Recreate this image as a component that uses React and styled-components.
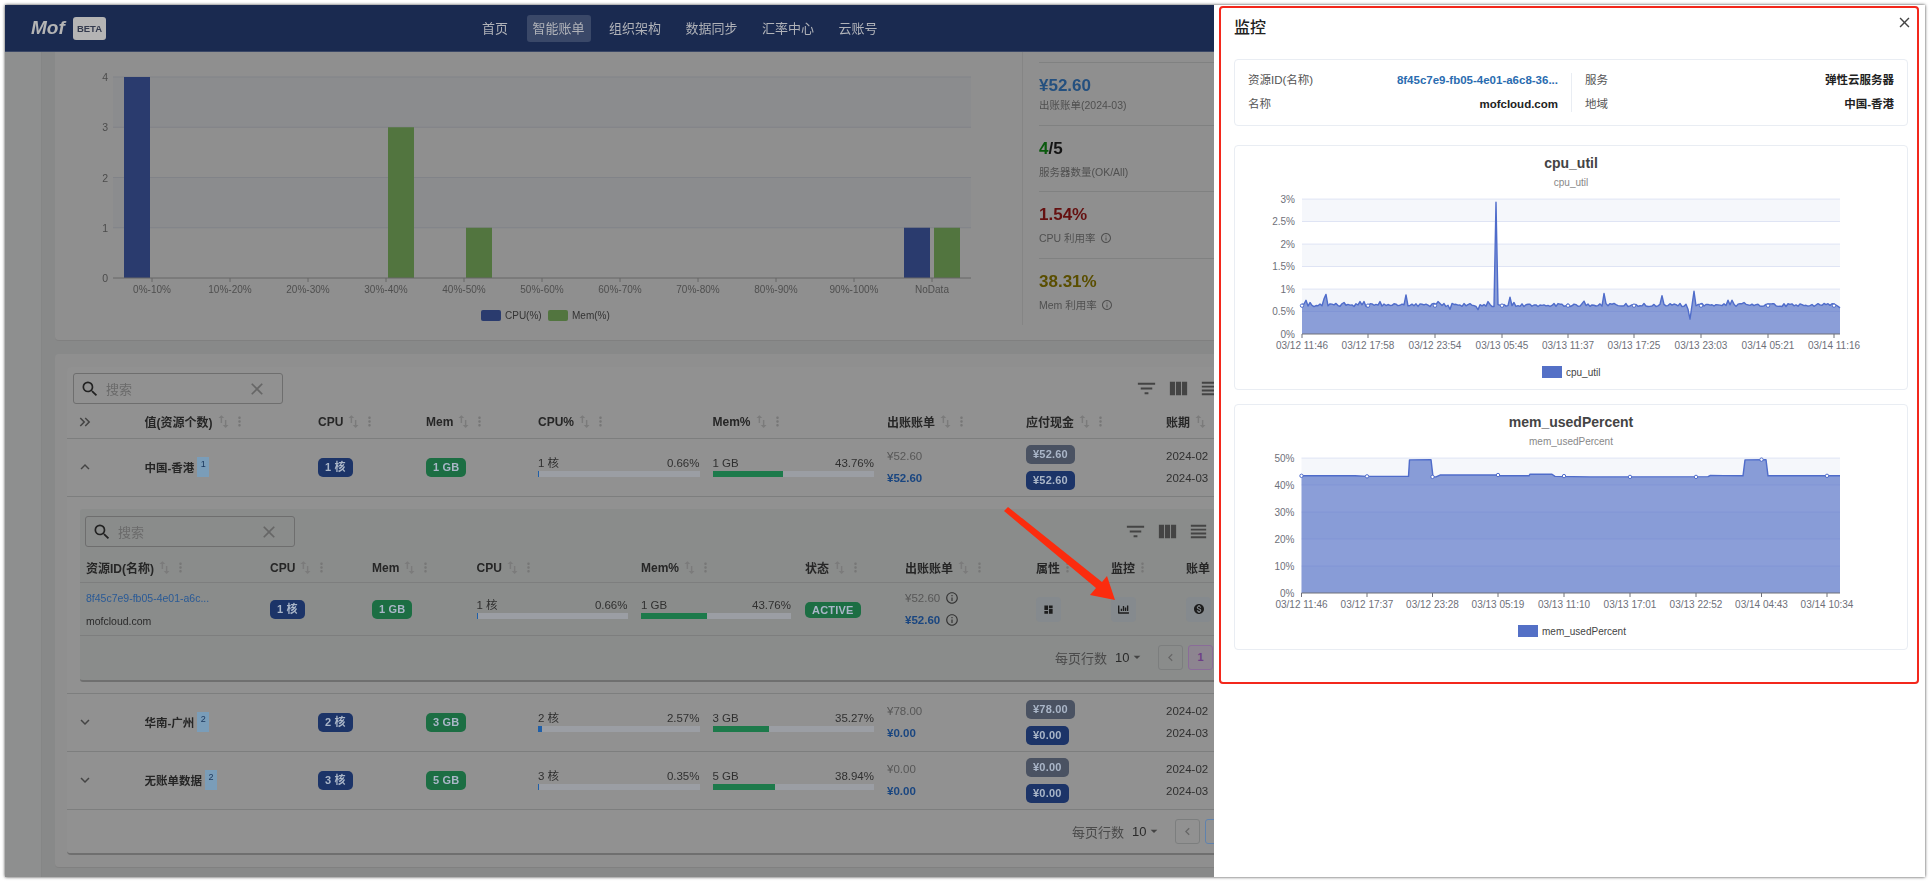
import React from 'react'
import styled, { createGlobalStyle } from 'styled-components'
import {
  MdSearch, MdClose, MdFilterList, MdViewColumn, MdViewHeadline, MdSwapVert, MdMoreVert,
  MdExpandLess, MdExpandMore, MdKeyboardDoubleArrowRight, MdInfoOutline, MdDashboard,
  MdMonetizationOn, MdChevronLeft, MdArrowDropDown,
} from 'react-icons/md'
import { FaChartBar } from 'react-icons/fa'

const FONT = `"Liberation Sans", "Noto Sans CJK SC", sans-serif`

const GlobalStyle = createGlobalStyle`
  html, body { margin: 0; height: 100%; background: #ffffff; overflow: hidden; }
  body { font-family: ${FONT}; }
  * { box-sizing: border-box; }
`

const Window = styled.div`
  position: absolute;
  left: 5px;
  top: 5px;
  width: 1920px;
  height: 872px;
  overflow: hidden;
  background: #8e8f8f;
  box-shadow: 0 0 3px rgba(0, 0, 0, 0.75);
`

const Blurred = styled.div`
  width: 100%;
  height: 100%;
  filter: blur(0.5px);
`

const NavBar = styled.header`
  height: 47px;
  display: flex;
  align-items: center;
  padding-left: 26px;
  background: #1a2a50;
  border-bottom: 1px solid #3a4766;
`

const Logo = styled.span`
  width: 42px;
  font-size: 19px;
  font-weight: bold;
  font-style: italic;
  color: #b4b4b4;
`

const BetaBadge = styled.span`
  width: 33px;
  height: 23px;
  display: flex;
  align-items: center;
  justify-content: center;
  border-radius: 3px;
  background: #b4b4b4;
  color: #333a4d;
  font-size: 9.5px;
  font-weight: bold;
`

const NavItems = styled.nav`
  display: flex;
  gap: 12.5px;
  margin-left: 370px;
`

const NavItem = styled.a`
  height: 27px;
  line-height: 27px;
  padding: 0 6px;
  border-radius: 3px;
  font-size: 13px;
  color: #b0b2b8;
  background: ${(p) => (p.$active ? '#3a4868' : 'transparent')};
`

const Main = styled.main`
  height: 825px;
  margin-left: 36px;
  padding-left: 13px;
  border-left: 1px solid #858686;
  background: #888989;
  display: flex;
  flex-direction: column;
  gap: 13px;
`

const SummaryCard = styled.section`
  height: 289px;
  flex: none;
  display: flex;
  background: #8f8f8f;
  border-bottom: 1px solid #808080;
  border-radius: 0 0 4px 4px;
`

const ChartPane = styled.div`
  width: 968px;
  height: 273px;
  flex: none;
  border-right: 1px solid #858585;
`

const StatsPane = styled.div`
  flex: 1;
  padding: 10px 0 0 16px;
`

const Stat = styled.div`
  height: ${(p) => p.$height}px;
  padding-top: 12px;
  border-top: 1px solid #808181;
`

const StatValue = styled.div`
  font-size: 17px;
  line-height: 22px;
  font-weight: bold;
  color: ${(p) => p.$color || '#141414'};
`

const StatDim = styled.span`
  color: ${(p) => p.$color};
`

const StatLabel = styled.div`
  display: flex;
  align-items: center;
  gap: 4px;
  margin-top: ${(p) => p.$gap}px;
  font-size: 10.5px;
  line-height: 14px;
  color: #505050;
  svg { font-size: 12px; }
`

const TableCard = styled.section`
  height: 514px;
  flex: none;
  padding: 13px 12px;
  background: #8f8f8f;
  border-radius: 4px;
  border-bottom: 1px solid #808080;
`

const TablePaper = styled.div`
  height: 488px;
  background: #919191;
  border-radius: 4px;
  border-bottom: 2px solid #6f6f6f;
`

const Toolbar = styled.div`
  height: ${(p) => p.$h}px;
  display: flex;
  align-items: flex-start;
  justify-content: space-between;
  padding: ${(p) => p.$top}px 0 0 ${(p) => p.$left}px;
`

const SearchBox = styled.div`
  width: 210px;
  height: 31px;
  display: flex;
  align-items: center;
  padding: 0 15px 0 6px;
  border: 1px solid #6e6e6e;
  border-radius: 3px;
  color: #222;
  svg { font-size: 20px; }
`

const SearchText = styled.span`
  flex: 1;
  margin-left: 6px;
  font-size: 13px;
  color: #6b6b6b;
`

const ClearIcon = styled(MdClose)`
  color: #666;
`

const ToolIcons = styled.div`
  display: flex;
  gap: 8.5px;
  margin-top: 4px;
  padding-right: ${(p) => p.$pad}px;
  color: #444;
  svg { font-size: 23px; display: block; }
`

const Grid = styled.div`
  display: grid;
  grid-template-columns: ${(p) => p.$cols};
  align-items: center;
  padding-left: ${(p) => p.$left}px;
  padding-bottom: ${(p) => p.$bottom || 0}px;
  height: ${(p) => p.$h}px;
  border-bottom: 1px solid #7d7e7e;
`

const HeadCell = styled.div`
  display: flex;
  align-items: center;
  font-size: 12px;
  font-weight: bold;
  color: #262626;
  white-space: nowrap;
`

const SortIcon = styled(MdSwapVert)`
  margin-left: 2px;
  font-size: 17px;
  color: #7b7b7b;
`

const MenuIcon = styled(MdMoreVert)`
  font-size: 15px;
  color: #777;
`

const ChevronCell = styled.div`
  display: flex;
  margin-left: -3px;
  color: #444;
  svg { font-size: 18px; }
`

const GroupName = styled.div`
  display: flex;
  align-items: center;
  gap: 3px;
  font-size: 11.5px;
  font-weight: bold;
  color: #262626;
`

const CountBadge = styled.span`
  width: 12px;
  height: 20px;
  padding-top: 1px;
  text-align: center;
  background: #7a9db9;
  color: #18345a;
  font-size: 9px;
  font-weight: normal;
  line-height: 13px;
`

const TONES = {
  blue: '#1c3468',
  green: '#1c6e43',
  gray: '#4a5262',
}

const Tag = styled.span`
  display: inline-block;
  height: ${(p) => p.$h || 19}px;
  line-height: ${(p) => p.$h || 19}px;
  padding: 0 7px;
  border-radius: 5px;
  background: ${(p) => TONES[p.$tone]};
  color: #aab6c8;
  font-size: 11px;
  font-weight: bold;
  letter-spacing: 0.2px;
  white-space: nowrap;
`

const ProgressCell = styled.div`
  width: ${(p) => p.$w}px;
  margin-top: ${(p) => p.$top}px;
`

const ProgressLabels = styled.div`
  display: flex;
  justify-content: space-between;
  font-size: 11.5px;
  line-height: 14px;
  color: #303030;
`

const Track = styled.div`
  height: 6px;
  margin-top: 1px;
  background: #9b9ea4;
`

const Fill = styled.div`
  height: 100%;
  background: ${(p) => p.$color};
`

const StackCell = styled.div`
  display: flex;
  flex-direction: column;
  gap: ${(p) => p.$gap}px;
`

const MoneyLine = styled.div`
  display: flex;
  align-items: center;
  gap: 5px;
  font-size: 11.5px;
  line-height: 14px;
  font-weight: ${(p) => (p.$strong ? 'bold' : 'normal')};
  color: ${(p) => (p.$strong ? '#1a4680' : '#575757')};
  svg { font-size: 14px; color: #333; }
`

const PeriodLine = styled.div`
  font-size: 11.5px;
  line-height: 14px;
  color: #303030;
`

const SubPanel = styled.div`
  height: 197px;
  padding: 12px 0 12px 13px;
  border-bottom: 1px solid #7d7e7e;
`

const SubPaper = styled.div`
  height: 173px;
  background: #8a8c8b;
  border-radius: 3px;
  border-bottom: 2px solid #6f6f6f;
`

const ResourceLink = styled.div`
  font-size: 10.5px;
  color: #2a5a96;
  line-height: 14px;
`

const ResourceName = styled.div`
  font-size: 10.5px;
  color: #2a2a2a;
  line-height: 14px;
`

const ActionButton = styled.div`
  width: 25px;
  height: 25px;
  display: flex;
  align-items: center;
  justify-content: center;
  border-radius: 4px;
  background: #858a8e;
  color: #1d1d1d;
  svg { font-size: ${(p) => p.$size || 11}px; }
`

const Pagination = styled.div`
  height: ${(p) => p.$h}px;
  display: flex;
  align-items: center;
  padding-left: ${(p) => p.$left}px;
  font-size: 13px;
  color: #4a4a4a;
`

const PageSize = styled.span`
  display: flex;
  align-items: center;
  margin-left: 8px;
  width: 43px;
  color: #2a2a2a;
  font-size: 13px;
  svg { font-size: 16px; color: #444; }
`

const PageButton = styled.span`
  width: 25px;
  height: 25px;
  flex: none;
  display: flex;
  align-items: center;
  justify-content: center;
  margin-right: 5px;
  border: 1px solid ${(p) => p.$border};
  border-radius: 3px;
  color: ${(p) => p.$color};
  font-size: 11px;
  background: ${(p) => p.$bg || 'transparent'};
  font-weight: bold;
  svg { font-size: 15px; }
`

const Drawer = styled.aside`
  position: absolute;
  top: 0;
  right: 0;
  bottom: 0;
  width: 711px;
  padding: 0 17px 0 20px;
  background: #ffffff;
`

const DrawerTitle = styled.h2`
  margin: 0;
  height: 54px;
  padding-top: 13px;
  font-size: 16px;
  line-height: 20px;
  font-weight: 500;
  color: #222;
`

const CloseButton = styled(MdClose)`
  position: absolute;
  top: 9px;
  right: 12px;
  font-size: 17px;
  color: #444;
`

const InfoCard = styled.div`
  height: 67px;
  display: grid;
  grid-template-columns: 1fr 1fr;
  align-items: center;
  border: 1px solid #e9edf3;
  border-radius: 4px;
  margin-bottom: 19px;
`

const InfoColumn = styled.dl`
  margin: 0;
  padding: 0 13px;
  display: grid;
  grid-template-columns: auto 1fr;
  row-gap: 9px;
  border-left: ${(p) => (p.$divided ? '1px solid #e9edf3' : 'none')};
`

const InfoLabel = styled.dt`
  font-size: 11.5px;
  line-height: 15px;
  color: #555;
`

const InfoValue = styled.dd`
  margin: 0;
  text-align: right;
  font-size: 11.5px;
  line-height: 15px;
  font-weight: bold;
  color: ${(p) => (p.$link ? '#2a6cb0' : '#222')};
`

const ChartCard = styled.div`
  height: ${(p) => p.$h}px;
  margin-bottom: 14px;
  padding-top: 9px;
  border: 1px solid #e9edf3;
  border-radius: 4px;
`

const ChartTitle = styled.div`
  text-align: center;
  font-size: 14px;
  line-height: 16px;
  font-weight: bold;
  color: #444;
`

const ChartSub = styled.div`
  margin-top: 6px;
  text-align: center;
  font-size: 10px;
  line-height: 12px;
  color: #888;
`

const ChartSvg = styled.svg`
  display: block;
  margin-top: 2px;
  font-family: ${FONT};
`

const RedFrame = styled.div`
  position: absolute;
  left: 5px;
  right: 6px;
  top: 1px;
  height: 678px;
  border: 2px solid #f3281c;
  border-radius: 4px;
  pointer-events: none;
`

const Arrow = styled.svg`
  position: absolute;
  left: 0;
  top: 0;
`

const AXIS_TEXT = '#6e7079'

// bars chart in the summary card, coordinates are in card pixels
const DISTRIBUTION = ['0%-10%', '10%-20%', '20%-30%', '30%-40%', '40%-50%', '50%-60%', '60%-70%', '70%-80%', '80%-90%', '90%-100%', 'NoData']
const DIST_BARS = [
  { cat: 0, series: 'cpu', value: 4 },
  { cat: 3, series: 'mem', value: 3 },
  { cat: 4, series: 'mem', value: 1 },
  { cat: 10, series: 'cpu', value: 1 },
  { cat: 10, series: 'mem', value: 1 },
]

const DistributionChart = () => {
  const left = 58
  const width = 858
  const top = 25
  const step = 50.25
  const bottom = top + step * 4
  const catW = width / 11
  return (
    <ChartSvg width="967" height="273" style={{ marginTop: 0 }}>
      <rect x={left} y={top} width={width} height={step} fill="#8b8c8e" />
      <rect x={left} y={top + step * 2} width={width} height={step} fill="#8b8c8e" />
      {[0, 1, 2, 3].map((i) => (
        <line key={i} x1={left} x2={left + width} y1={top + step * i} y2={top + step * i} stroke="#818388" />
      ))}
      {[0, 1, 2, 3, 4].map((i) => (
        <text key={i} x="53" y={bottom - step * i + 4} textAnchor="end" fontSize="10.5" fill="#4c4c4c">{i}</text>
      ))}
      {DIST_BARS.map((b) => {
        const center = left + catW * (b.cat + 0.5)
        const x = b.series === 'cpu' ? center - 28 : center + 2
        return (
          <rect key={b.cat + b.series} x={x} y={bottom - step * b.value} width="26" height={step * b.value}
            fill={b.series === 'cpu' ? '#2a3b6e' : '#52753f'} />
        )
      })}
      <line x1={left} x2={left + width} y1={bottom} y2={bottom} stroke="#666" />
      {DISTRIBUTION.map((label, i) => {
        const center = left + catW * (i + 0.5)
        return (
          <g key={label}>
            <line x1={center} x2={center} y1={bottom} y2={bottom + 4} stroke="#666" />
            <text x={center} y={bottom + 15} textAnchor="middle" fontSize="10" fill="#4f4f4f">{label}</text>
          </g>
        )
      })}
      <rect x="426" y="258" width="20" height="11" rx="2" fill="#2a3b6e" />
      <text x="450" y="267" fontSize="10" fill="#333">CPU(%)</text>
      <rect x="493" y="258" width="20" height="11" rx="2" fill="#52753f" />
      <text x="517" y="267" fontSize="10" fill="#333">Mem(%)</text>
    </ChartSvg>
  )
}

const AreaChart = ({ plotLeft, plotRight, top, bottom, yLabels, xLabels, ticks, points, marks, legendX, name, yOf }) => (
  <ChartSvg width="672" height="197">
    {yLabels.map((label, i) => {
      const step = (bottom - top) / (yLabels.length - 1)
      const y = bottom - step * i
      return (
        <g key={label}>
          {i < yLabels.length - 1 && i % 2 === yLabels.length % 2 && (
            <rect x={plotLeft} y={y - step} width={plotRight - plotLeft} height={step} fill="#f5f7fb" />
          )}
        </g>
      )
    })}
    <polygon
      points={`${plotLeft},${bottom} ${points.map(([x, v]) => `${x},${yOf(v)}`).join(' ')} ${plotRight},${bottom}`}
      fill="#5470c6" fillOpacity="0.68"
    />
    {yLabels.map((label, i) => {
      const y = bottom - ((bottom - top) / (yLabels.length - 1)) * i
      return (
        <g key={label}>
          {i > 0 && <line x1={plotLeft} x2={plotRight} y1={y} y2={y} stroke="#5470c6" strokeOpacity="0.16" />}
          <text x={plotLeft - 7} y={y + 3.5} textAnchor="end" fontSize="10" fill={AXIS_TEXT}>{label}</text>
        </g>
      )
    })}
    <polyline points={points.map(([x, v]) => `${x},${yOf(v)}`).join(' ')} fill="none" stroke="#4f6cca" strokeWidth="1.4" strokeLinejoin="round" />
    {marks.map(([x, v]) => (
      <circle key={x} cx={x} cy={yOf(v)} r="1.7" fill="#ffffff" stroke="#4f6cca" />
    ))}
    <line x1={plotLeft} x2={plotRight} y1={bottom} y2={bottom} stroke={AXIS_TEXT} />
    {xLabels.map((label, i) => (
      <g key={label}>
        <line x1={ticks[i]} x2={ticks[i]} y1={bottom} y2={bottom + 4} stroke={AXIS_TEXT} />
        <text x={ticks[i]} y={bottom + 14.5} textAnchor="middle" fontSize="10" fill={AXIS_TEXT}>{label}</text>
      </g>
    ))}
    <rect x={legendX} y={bottom + 32} width="20" height="12" fill="#5470c6" />
    <text x={legendX + 24} y={bottom + 42} fontSize="10" fill="#444">{name}</text>
  </ChartSvg>
)

// page x -> chart x: charts start right after the card border at 1235
const px = (x) => x - 1235

const CPU_SPECIAL = {
  1306: 0.75, 1310: 0.7, 1324: 0.78, 1326: 0.88, 1344: 0.7, 1360: 0.72, 1364: 0.72, 1368: 0.6, 1380: 0.72,
  1406: 0.87, 1434: 0.68, 1438: 0.72, 1450: 0.55, 1478: 0.54, 1488: 0.72, 1496: 2.93, 1510: 0.82, 1514: 0.7,
  1584: 0.73, 1604: 0.9, 1662: 0.85, 1688: 0.55, 1690: 0.33, 1694: 0.95, 1728: 0.75, 1732: 0.75, 1744: 0.7, 1840: 0.58,
}

const cpuPoints = []
for (let x = 1302; x <= 1840; x += 2) {
  const noise = Math.sin(x * 12.9898) * 43758.5453
  const jitter = (noise - Math.floor(noise) - 0.5) * 0.07
  cpuPoints.push([px(x), CPU_SPECIAL[x] ?? 0.645 + jitter])
}
const CPU_TICKS = [1302, 1368, 1435, 1502, 1568, 1634, 1701, 1768, 1834]
const cpuMarks = CPU_TICKS.map((x) => [px(x), 0.63])

const MEM_POINTS = [
  [1301.5, 43.4], [1355, 43.4], [1367, 43.2], [1408.5, 43.2], [1409.5, 49.3], [1431, 49.4], [1433, 43], [1436, 43],
  [1440, 43.7], [1498, 43.7], [1500, 43.4], [1529, 43.4], [1530, 44], [1552, 44], [1555, 43.2], [1590, 43], [1708, 43.1],
  [1710, 43.5], [1743, 43.4], [1745, 49.3], [1766, 49.4], [1768, 43.4], [1840, 43.4],
].map(([x, v]) => [px(x), v])
const MEM_TICKS = [1301.5, 1367, 1432.5, 1498, 1564, 1630, 1696, 1761.5, 1827]
const memMarks = MEM_TICKS.map((x, i) => [px(x), [43.4, 43.2, 43, 43.7, 43.3, 43, 43, 49.4, 43.4][i]])

const MAIN_COLS = '65.5px 173.5px 108px 112px 174.5px 174.5px 139px 140px 100px'
const SUB_COLS = '184px 102px 104.5px 164.5px 164px 100px 131px 75px 75px 75px'

const MAIN_HEADS = ['值(资源个数)', 'CPU', 'Mem', 'CPU%', 'Mem%', '出账账单', '应付现金', '账期']
const SUB_HEADS = ['资源ID(名称)', 'CPU', 'Mem', 'CPU', 'Mem%', '状态', '出账账单', '属性', '监控', '账单']

const GROUPS = [
  { name: '中国-香港', count: 1, cpu: '1 核', mem: '1 GB', cpuPct: 0.66, memPct: 43.76, prev: '¥52.60', cur: '¥52.60', open: true },
  { name: '华南-广州', count: 2, cpu: '2 核', mem: '3 GB', cpuPct: 2.57, memPct: 35.27, prev: '¥78.00', cur: '¥0.00' },
  { name: '无账单数据', count: 2, cpu: '3 核', mem: '5 GB', cpuPct: 0.35, memPct: 38.94, prev: '¥0.00', cur: '¥0.00' },
]

const Progress = ({ label, pct, color, width, top }) => (
  <ProgressCell $w={width} $top={top}>
    <ProgressLabels>
      <span>{label}</span>
      <span>{pct.toFixed(2)}%</span>
    </ProgressLabels>
    <Track>
      <Fill $color={color} style={{ width: `${Math.max(pct, 0.9)}%` }} />
    </Track>
  </ProgressCell>
)

const Head = ({ text, sort = true, menu = true }) => (
  <HeadCell>
    {text}
    {sort && <SortIcon />}
    {menu && <MenuIcon />}
  </HeadCell>
)

const GroupRow = ({ g }) => (
  <Grid $cols={MAIN_COLS} $left={12} $h={58} $bottom={2}>
    <ChevronCell>{g.open ? <MdExpandLess /> : <MdExpandMore />}</ChevronCell>
    <GroupName>{g.name}<CountBadge>{g.count}</CountBadge></GroupName>
    <div><Tag $tone="blue">{g.cpu}</Tag></div>
    <div><Tag $tone="green">{g.mem}</Tag></div>
    <Progress label={g.cpu} pct={g.cpuPct} color="#1f5fa8" width={161.5} top={-1} />
    <Progress label={g.mem} pct={g.memPct} color="#1d7a4b" width={161.5} top={-1} />
    <StackCell $gap={8}>
      <MoneyLine>{g.prev}</MoneyLine>
      <MoneyLine $strong>{g.cur}</MoneyLine>
    </StackCell>
    <StackCell $gap={6}>
      <div><Tag $tone="gray">{g.prev}</Tag></div>
      <div><Tag $tone="blue">{g.cur}</Tag></div>
    </StackCell>
    <StackCell $gap={8}>
      <PeriodLine>2024-02</PeriodLine>
      <PeriodLine>2024-03</PeriodLine>
    </StackCell>
  </Grid>
)

const Tools = ({ pad }) => (
  <ToolIcons $pad={pad}>
    <MdFilterList />
    <MdViewColumn />
    <MdViewHeadline />
  </ToolIcons>
)

const Search = () => (
  <SearchBox>
    <MdSearch />
    <SearchText>搜索</SearchText>
    <ClearIcon />
  </SearchBox>
)

const ResourcePanel = () => (
  <SubPanel>
    <SubPaper>
      <Toolbar $h={44} $top={7} $left={5}>
        <Search />
        <Tools pad={703} />
      </Toolbar>
      <Grid $cols={SUB_COLS} $left={6} $h={30}>
        {SUB_HEADS.map((h, i) => <Head key={h + i} text={h} sort={i < 7} />)}
      </Grid>
      <Grid $cols={SUB_COLS} $left={6} $h={53}>
        <StackCell $gap={9}>
          <ResourceLink>8f45c7e9-fb05-4e01-a6c...</ResourceLink>
          <ResourceName>mofcloud.com</ResourceName>
        </StackCell>
        <div><Tag $tone="blue">1 核</Tag></div>
        <div><Tag $tone="green">1 GB</Tag></div>
        <Progress label="1 核" pct={0.66} color="#1f5fa8" width={151} top={-2} />
        <Progress label="1 GB" pct={43.76} color="#1d7a4b" width={150} top={-2} />
        <div><Tag $tone="green" $h={16}>ACTIVE</Tag></div>
        <StackCell $gap={8}>
          <MoneyLine>¥52.60 <MdInfoOutline /></MoneyLine>
          <MoneyLine $strong>¥52.60 <MdInfoOutline /></MoneyLine>
        </StackCell>
        <ActionButton><MdDashboard /></ActionButton>
        <ActionButton><FaChartBar /></ActionButton>
        <ActionButton $size={12}><MdMonetizationOn /></ActionButton>
      </Grid>
      <Pagination $h={42} $left={975}>
        每页行数
        <PageSize>10<MdArrowDropDown /></PageSize>
        <PageButton $border="#7c7e7e" $color="#666"><MdChevronLeft /></PageButton>
        <PageButton $border="#8a6c98" $color="#6d3f87" $bg="#8d8590">1</PageButton>
      </Pagination>
    </SubPaper>
  </SubPanel>
)

const App = () => (
  <>
    <GlobalStyle />
    <Window>
      <Blurred>
        <NavBar>
          <Logo>Mof</Logo>
          <BetaBadge>BETA</BetaBadge>
          <NavItems>
            <NavItem>首页</NavItem>
            <NavItem $active>智能账单</NavItem>
            <NavItem>组织架构</NavItem>
            <NavItem>数据同步</NavItem>
            <NavItem>汇率中心</NavItem>
            <NavItem>云账号</NavItem>
          </NavItems>
        </NavBar>
        <Main>
          <SummaryCard>
            <ChartPane><DistributionChart /></ChartPane>
            <StatsPane>
              <Stat $height={63}>
                <StatValue $color="#24507f">¥52.60</StatValue>
                <StatLabel $gap={1}>出账账单(2024-03)</StatLabel>
              </Stat>
              <Stat $height={66}>
                <StatValue><StatDim $color="#0b5a0e">4</StatDim>/5</StatValue>
                <StatLabel $gap={5}>服务器数量(OK/All)</StatLabel>
              </Stat>
              <Stat $height={67}>
                <StatValue $color="#651010">1.54%</StatValue>
                <StatLabel $gap={5}>CPU 利用率 <MdInfoOutline /></StatLabel>
              </Stat>
              <Stat $height={67}>
                <StatValue $color="#5a4e00">38.31%</StatValue>
                <StatLabel $gap={5}>Mem 利用率 <MdInfoOutline /></StatLabel>
              </Stat>
            </StatsPane>
          </SummaryCard>
          <TableCard>
            <TablePaper>
              <Toolbar $h={38} $top={6} $left={6}>
                <Search />
                <Tools pad={692} />
              </Toolbar>
              <Grid $cols={MAIN_COLS} $left={12} $h={34}>
                <ChevronCell><MdKeyboardDoubleArrowRight /></ChevronCell>
                {MAIN_HEADS.map((h) => <Head key={h} text={h} menu={h !== '账期'} />)}
              </Grid>
              <GroupRow g={GROUPS[0]} />
              <ResourcePanel />
              <GroupRow g={GROUPS[1]} />
              <GroupRow g={GROUPS[2]} />
              <Pagination $h={42} $left={1005}>
                每页行数
                <PageSize>10<MdArrowDropDown /></PageSize>
                <PageButton $border="#7c7e7e" $color="#666"><MdChevronLeft /></PageButton>
                <PageButton $border="#5f82ad" $color="#1f5fa8">1</PageButton>
              </Pagination>
            </TablePaper>
          </TableCard>
        </Main>

        <Arrow width="1209" height="600">
          <polygon points="1003,502 1097,577 1102,571 1110,595 1085,590 1091,583 999,506" fill="#fb2c0e" />
        </Arrow>

        <Drawer>
          <DrawerTitle>监控</DrawerTitle>
          <CloseButton />
          <InfoCard>
            <InfoColumn>
              <InfoLabel>资源ID(名称)</InfoLabel>
              <InfoValue $link>8f45c7e9-fb05-4e01-a6c8-36...</InfoValue>
              <InfoLabel>名称</InfoLabel>
              <InfoValue>mofcloud.com</InfoValue>
            </InfoColumn>
            <InfoColumn $divided>
              <InfoLabel>服务</InfoLabel>
              <InfoValue>弹性云服务器</InfoValue>
              <InfoLabel>地域</InfoLabel>
              <InfoValue>中国-香港</InfoValue>
            </InfoColumn>
          </InfoCard>
          <ChartCard $h={245}>
            <ChartTitle>cpu_util</ChartTitle>
            <ChartSub>cpu_util</ChartSub>
            <AreaChart
              plotLeft={px(1302)} plotRight={px(1840)} top={8} bottom={143}
              yLabels={['0%', '0.5%', '1%', '1.5%', '2%', '2.5%', '3%']}
              xLabels={['03/12 11:46', '03/12 17:58', '03/12 23:54', '03/13 05:45', '03/13 11:37', '03/13 17:25', '03/13 23:03', '03/14 05:21', '03/14 11:16']}
              ticks={CPU_TICKS.map(px)}
              points={cpuPoints}
              marks={cpuMarks}
              legendX={px(1542)}
              name="cpu_util"
              yOf={(v) => 143 - v * 45}
            />
          </ChartCard>
          <ChartCard $h={246}>
            <ChartTitle>mem_usedPercent</ChartTitle>
            <ChartSub>mem_usedPercent</ChartSub>
            <AreaChart
              plotLeft={px(1301.5)} plotRight={px(1840)} top={8} bottom={143}
              yLabels={['0%', '10%', '20%', '30%', '40%', '50%']}
              xLabels={['03/12 11:46', '03/12 17:37', '03/12 23:28', '03/13 05:19', '03/13 11:10', '03/13 17:01', '03/13 22:52', '03/14 04:43', '03/14 10:34']}
              ticks={MEM_TICKS.map(px)}
              points={MEM_POINTS}
              marks={memMarks}
              legendX={px(1518)}
              name="mem_usedPercent"
              yOf={(v) => 143 - v * 2.7}
            />
          </ChartCard>
          <RedFrame />
        </Drawer>
      </Blurred>
    </Window>
  </>
)

export default App
